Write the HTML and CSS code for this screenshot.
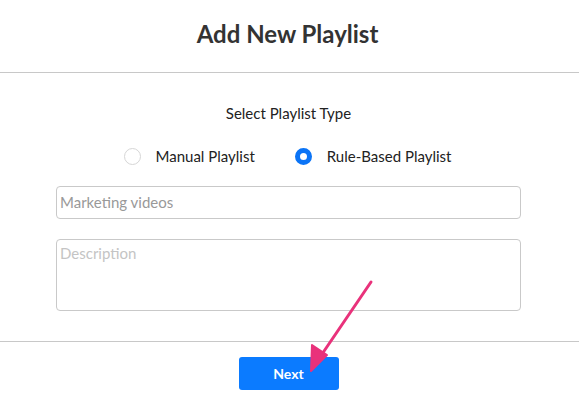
FILE: index.html
```html
<!DOCTYPE html>
<html>
<head>
<meta charset="utf-8">
<link rel="stylesheet" href="styles.css">
</head>
<body>
<div class="modal">
  <header class="modal-header">
    <h1 class="title">Add New Playlist</h1>
  </header>
  <section class="modal-body">
    <div class="type-label">Select Playlist Type</div>
    <div class="radios">
      <label class="radio"><span class="dot"></span><span class="radio-text">Manual Playlist</span></label>
      <label class="radio checked"><span class="dot"></span><span class="radio-text">Rule-Based Playlist</span></label>
    </div>
    <input class="field name" type="text" placeholder="Marketing videos">
    <textarea class="field desc" placeholder="Description"></textarea>
  </section>
  <footer class="modal-footer">
    <button class="next">Next</button>
  </footer>
  <svg class="arrow" width="579" height="401" viewBox="0 0 579 401">
    <line x1="371" y1="282" x2="318" y2="360" stroke="#e9327b" stroke-width="3" stroke-linecap="round"/>
    <polygon points="311,371 312,345 327,355" fill="#e9327b" stroke="#e9327b" stroke-width="2" stroke-linejoin="round"/>
  </svg>
</div>
</body>
</html>
```
FILE: styles.css
```css
html, body {
  margin: 0;
  padding: 0;
  background: #fff;
}
body {
  font-family: Lato, "Open Sans", sans-serif;
  color: #333;
}
.modal {
  position: relative;
  width: 579px;
  height: 401px;
}
.modal-header {
  height: 72px;
  border-bottom: 1px solid #c8c8c8;
  display: flex;
  align-items: center;
  justify-content: center;
}
.title {
  margin: 0;
  font-size: 24px;
  font-weight: 700;
  color: #333;
  position: relative;
  top: -3px;
  padding-right: 4px;
}
.modal-body {
  padding: 30px 58px 0 56px;
  height: 238px;
  box-sizing: border-box;
  display: flex;
  flex-direction: column;
}
.type-label {
  text-align: center;
  font-size: 15px;
  line-height: 20px;
  color: #222;
}
.radios {
  display: flex;
  justify-content: center;
  gap: 40px;
  margin-top: 23px;
  padding-right: 2px;
}
.radio {
  display: flex;
  align-items: center;
  gap: 15px;
  font-size: 15px;
  line-height: 20px;
  color: #222;
}
.dot {
  width: 17px;
  height: 17px;
  border: 1px solid #d6d6d6;
  border-radius: 50%;
  box-sizing: border-box;
  background: #fff;
}
.checked .dot {
  border: 5px solid #0b74f6;
  background: #fff;
}
.field {
  display: block;
  width: 100%;
  box-sizing: border-box;
  border: 1px solid #c9c9c9;
  border-radius: 4px;
  font-family: Lato, "Open Sans", sans-serif;
  font-size: 15px;
  padding: 0 3px;
  margin: 0;
  outline: none;
}
.name {
  margin-top: 20px;
  height: 34px;
}
.name::placeholder {
  color: #999;
}
.desc {
  margin-top: 20px;
  height: 75px;
  padding-top: 4px;
  resize: none;
}
.desc::placeholder {
  color: #c4c4c4;
}
.modal-footer {
  border-top: 1px solid #c8c8c8;
  margin-top: 30px;
  display: flex;
  justify-content: center;
  padding-top: 15px;
}
.next {
  width: 100px;
  height: 33px;
  border: none;
  border-radius: 3px;
  background: #0b7bff;
  color: #fff;
  font-family: Lato, "Open Sans", sans-serif;
  font-weight: 700;
  font-size: 14px;
  margin-right: 2px;
}
.arrow {
  position: absolute;
  left: 0;
  top: 0;
  pointer-events: none;
}
```
